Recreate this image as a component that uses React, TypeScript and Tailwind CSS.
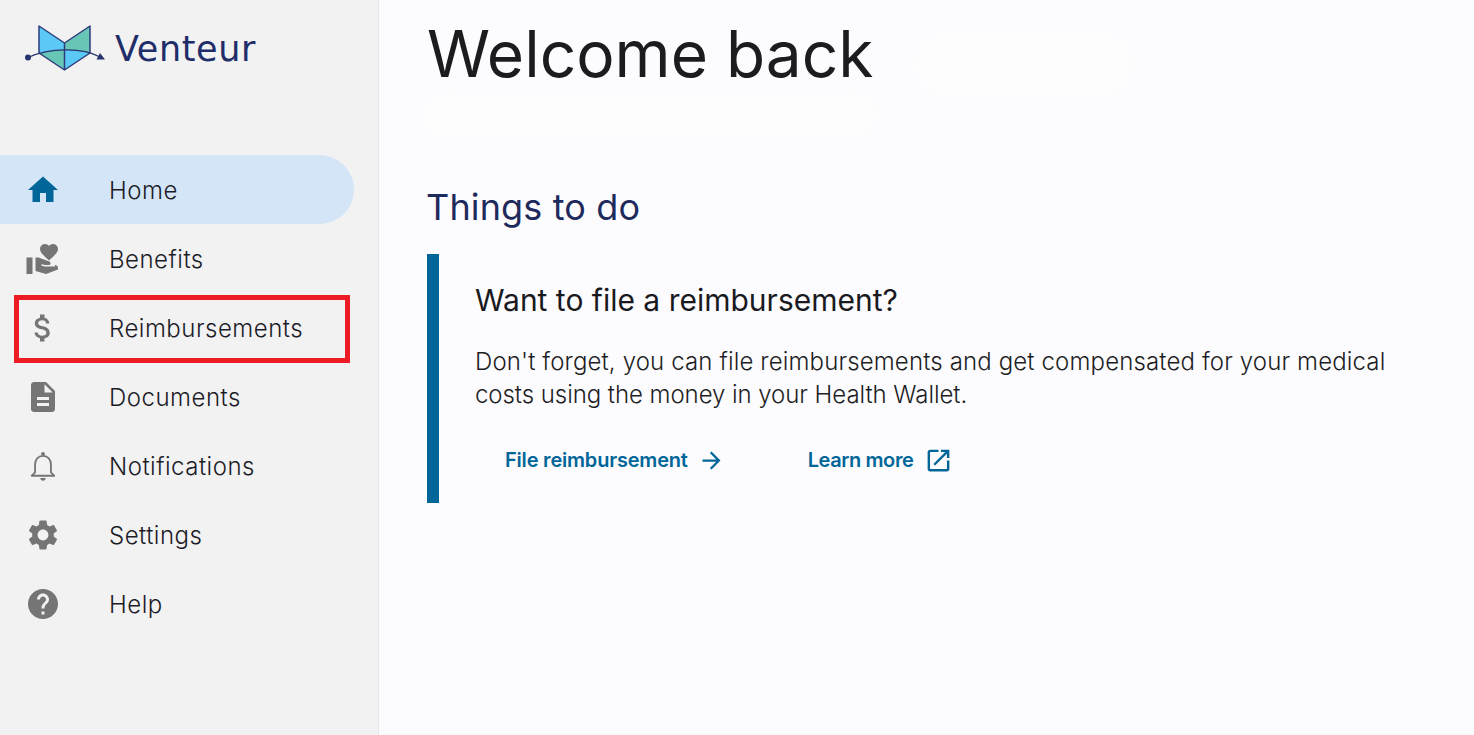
import React from "react";

const P: Record<string, string> = {
  Home: "M10 20v-6h4v6h5v-8h3L12 3 2 12h3v8z",
  Benefits: "M1 11h4v11H1zm15-7.75C16.65 2.49 17.66 2 18.7 2 20.55 2 22 3.45 22 5.3c0 2.27-2.91 4.9-6 7.7-3.09-2.81-6-5.44-6-7.7C10 3.45 11.45 2 13.3 2c1.04 0 2.05.49 2.7 1.25zM20 17h-7l-2.09-.73.33-.94L13 16h2.82c.65 0 1.18-.53 1.18-1.18 0-.49-.31-.93-.77-1.11L8.97 11H7v9.02L14 22l8-3v-1c-.01-1.1-.89-2-2-2z",
  Reimbursements: "M11.8 10.9c-2.27-.59-3-1.2-3-2.15 0-1.09 1.01-1.85 2.7-1.85 1.78 0 2.44.85 2.5 2.1h2.21c-.07-1.72-1.12-3.3-3.21-3.81V3h-3v2.16c-1.94.42-3.5 1.68-3.5 3.61 0 2.31 1.91 3.46 4.7 4.13 2.5.6 3 1.48 3 2.41 0 .69-.49 1.79-2.7 1.79-2.06 0-2.87-.92-2.98-2.1h-2.2c.12 2.19 1.76 3.42 3.68 3.83V21h3v-2.15c1.95-.37 3.5-1.5 3.5-3.55 0-2.84-2.43-3.81-4.7-4.4z",
  Documents: "M14 2H6c-1.1 0-1.99.9-1.99 2L4 20c0 1.1.89 2 1.99 2H18c1.1 0 2-.9 2-2V8l-6-6zm2 16H8v-2h8v2zm0-4H8v-2h8v2zm-3-5V3.5L18.5 9H13z",
  Settings: "M19.14 12.94c.04-.3.06-.61.06-.94 0-.32-.02-.64-.07-.94l2.03-1.58c.18-.14.23-.41.12-.61l-1.92-3.32c-.12-.22-.37-.29-.59-.22l-2.39.96c-.5-.38-1.03-.7-1.62-.94l-.36-2.54c-.04-.24-.24-.41-.48-.41h-3.84c-.24 0-.43.17-.47.41l-.36 2.54c-.59.24-1.13.57-1.62.94l-2.39-.96c-.22-.08-.47 0-.59.22L2.74 8.87c-.12.21-.08.47.12.61l2.03 1.58c-.05.3-.09.63-.09.94s.02.64.07.94l-2.03 1.58c-.18.14-.23.41-.12.61l1.92 3.32c.12.22.37.29.59.22l2.39-.96c.5.38 1.03.7 1.62.94l.36 2.54c.05.24.24.41.48.41h3.84c.24 0 .44-.17.47-.41l.36-2.54c.59-.24 1.13-.56 1.62-.94l2.39.96c.22.08.47 0 .59-.22l1.92-3.32c.12-.22.07-.47-.12-.61l-2.01-1.58zM12 15.6c-1.98 0-3.6-1.62-3.6-3.6s1.62-3.6 3.6-3.6 3.6 1.62 3.6 3.6-1.62 3.6-3.6 3.6z",
  Help: "M12 2C6.48 2 2 6.48 2 12s4.48 10 10 10 10-4.48 10-10S17.52 2 12 2zm1 17h-2v-2h2v2zm2.07-7.75l-.9.92C13.45 12.9 13 13.5 13 15h-2v-.5c0-1.1.45-2.1 1.17-2.83l1.24-1.26c.37-.36.59-.86.59-1.41 0-1.1-.9-2-2-2s-2 .9-2 2H8c0-2.21 1.79-4 4-4s4 1.79 4 4c0 .88-.36 1.68-.93 2.25z",
};

const items = ["Home", "Benefits", "Reimbursements", "Documents", "Notifications", "Settings", "Help"];

function Logo() {
  return (
    <svg width="84" height="48" viewBox="0 0 84 48" className="shrink-0">
      <path d="M15 2 L40.500 19 L40.500 46 L15 29 Z" fill="#5cc8f5" />
      <path d="M66 2 L40.500 19 L40.500 46 L66 29 Z" fill="#68c6b6" />
      <path d="M15 29 Q40.500 22 66 29 L40.500 46 Z" fill="#68c6b6" />
      <path d="M40.500 25.500 Q54 25.800 66 29 L40.500 46 Z" fill="#5cc8f5" />
      <path d="M15 2 L40.500 19 L66 2 L66 29 L40.500 46 L15 29 Z M40.500 19 V46" fill="none" stroke="#2f3d7c" strokeWidth="1.500" strokeLinejoin="round" />
      <path d="M4 33.500 C25 24 58 23 76 33" fill="none" stroke="#26336f" strokeWidth="1.300" />
      <circle cx="4" cy="33.500" r="3" fill="#26336f" />
      <path d="M81 35.500 L72.500 35.500 L76 29 Z" fill="#26336f" />
    </svg>
  );
}

function NavIcon({ name, active }: { name: string; active: boolean }) {
  if (name === "Notifications") {
    return (
      <svg width="36" height="36" viewBox="0 0 24 24" className="shrink-0">
        <path d="M4.500 18.500 L6.700 16.300 V11 C6.700 7.800 8.700 5.300 12 5.300 C15.300 5.300 17.300 7.800 17.300 11 V16.300 L19.500 18.500 Z" fill="none" stroke="#757575" strokeWidth="1.200" strokeLinejoin="round" />
        <circle cx="12" cy="4" r="1.300" fill="#757575" />
        <path d="M10.200 20h3.600c0 1-.8 1.800-1.800 1.800s-1.800-.8-1.800-1.800z" fill="#757575" />
      </svg>
    );
  }
  return (
    <svg width="36" height="36" viewBox="0 0 24 24" fill={active ? "#006699" : "#757575"} className="shrink-0">
      <path d={P[name]} />
    </svg>
  );
}

export default function App() {
  return (
    <div className="flex h-[735px] w-[1474px] overflow-hidden bg-[#fcfcfe] font-['Inter','Liberation_Sans',sans-serif]">
      <aside className="flex w-[379px] shrink-0 flex-col border-r border-r-[#e6e6ee] bg-[#f2f2f2]">
        <div className="flex h-[155px] items-start pl-[24px] pt-[24px]">
          <Logo />
          <span className="ml-[7px] mt-[5px] font-['DejaVu_Sans',sans-serif] text-[35px] leading-[40px] tracking-[0.6px] text-[#1f2d69]">Venteur</span>
        </div>
        <nav className="flex flex-col">
          {items.map((name) => {
            const active = name === "Home";
            return (
              <div key={name} className={`relative flex h-[69px] w-[354px] items-center rounded-r-[35px] pl-[25px] ${active ? "bg-[#d3e5f7]" : ""}`}>
                <NavIcon name={name} active={active} />
                <span className="relative top-[1px] ml-[48px] text-[24px] leading-[32px] font-[350] tracking-[0.5px] text-[#1c1c28]">{name}</span>
                {name === "Reimbursements" && (
                  <div className="absolute left-[14px] top-[2px] h-[68px] w-[336px] border-[5px] border-[#ed1c24]" />
                )}
              </div>
            );
          })}
        </nav>
      </aside>
      <main className="relative flex-1 pl-[48px]">
        <div className="absolute left-[540px] top-[38px] h-[52px] w-[210px] rounded-full bg-white opacity-60 blur-md" />
        <div className="absolute left-[46px] top-[98px] h-[34px] w-[450px] rounded-full bg-white opacity-60 blur-md" />
        <h1 className="relative mt-[16px] text-[64px] leading-[76px] font-normal text-[#1c1c1e]">Welcome back</h1>
        <h2 className="-ml-[1px] mt-[92px] text-[36px] leading-[46px] font-normal tracking-[0.15px] text-[#1f2a5c]">Things to do</h2>
        <section className="mt-[24px] h-[249px] w-[999px] border-l-[12px] border-l-[#006699] pl-[36px] pt-[28px]">
          <h3 className="text-[30px] leading-[36px] font-normal text-[#1a1a1e]">Want to file a reimbursement?</h3>
          <p className="mt-[27px] w-[930px] text-[24px] leading-[33px] font-[350] text-[#1e1e24]">
            <span className="block tracking-[0.14px]">Don't forget, you can file reimbursements and get compensated for your medical</span>
            <span className="block tracking-[-0.06px]">costs using the money in your Health Wallet.</span>
          </p>
          <div className="mt-[34px] flex items-center pl-[30px] text-[20px] font-semibold tracking-[-0.2px] text-[#006699]">
            <span>File reimbursement</span>
            <svg width="27" height="27" viewBox="0 0 24 24" fill="#006699" className="ml-[10px]">
              <path d="M12 4l-1.410 1.410L16.170 11H4v2h12.170l-5.580 5.590L12 20l8-8z" />
            </svg>
            <span className="ml-[83px] tracking-[-0.4px]">Learn more</span>
            <svg width="29" height="29" viewBox="0 0 24 24" fill="#006699" className="ml-[11px]">
              <path d="M19 19H5V5h7V3H5c-1.110 0-2 .9-2 2v14c0 1.100.89 2 2 2h14c1.100 0 2-.9 2-2v-7h-2v7zM14 3v2h3.590l-9.830 9.830 1.410 1.410L19 6.410V10h2V3h-7z" />
            </svg>
          </div>
        </section>
      </main>
    </div>
  );
}
